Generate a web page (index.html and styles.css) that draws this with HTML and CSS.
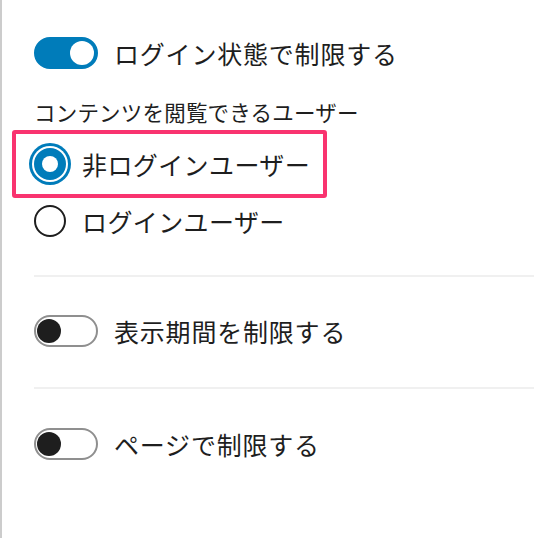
FILE: index.html
```html
<!DOCTYPE html>
<html lang="ja">
<head>
<meta charset="utf-8">
<link rel="stylesheet" href="styles.css">
</head>
<body>
<div class="panel">
  <div class="toggle-row first">
    <span class="toggle on"><span class="thumb"></span></span>
    <span class="toggle-label">ログイン状態で制限する</span>
  </div>
  <div class="group-label">コンテンツを閲覧できるユーザー</div>
  <div class="radios">
    <div class="radio-row highlighted">
      <span class="radio checked"></span>
      <span class="radio-label">非ログインユーザー</span>
    </div>
    <div class="radio-row">
      <span class="radio"></span>
      <span class="radio-label">ログインユーザー</span>
    </div>
  </div>
  <div class="sep sep1"></div>
  <div class="toggle-row second">
    <span class="toggle"><span class="thumb"></span></span>
    <span class="toggle-label">表示期間を制限する</span>
  </div>
  <div class="sep sep2"></div>
  <div class="toggle-row third">
    <span class="toggle"><span class="thumb"></span></span>
    <span class="toggle-label">ページで制限する</span>
  </div>
</div>
</body>
</html>
```
FILE: styles.css
```css
html, body {
  margin: 0;
  padding: 0;
  background: #ffffff;
}
body {
  font-family: "Noto Sans CJK JP", "Noto Sans", sans-serif;
  color: #1e1e1e;
  width: 534px;
  height: 538px;
  overflow: hidden;
}
.panel {
  box-sizing: border-box;
  height: 538px;
  border-left: 2px solid #cccccc;
  padding-left: 32px;
  padding-top: 37px;
}
.toggle-row {
  display: flex;
  align-items: center;
  gap: 16px;
  height: 32px;
}
.toggle-label {
  font-size: 25px;
  line-height: 32px;
  letter-spacing: 0.8px;
  white-space: nowrap;
}
.toggle {
  position: relative;
  box-sizing: border-box;
  flex: none;
  width: 64px;
  height: 32px;
  border-radius: 16px;
  border: 2px solid #8f8f8f;
  background: #ffffff;
}
.toggle .thumb {
  position: absolute;
  left: 1px;
  top: 2px;
  width: 24px;
  height: 24px;
  border-radius: 50%;
  background: #1e1e1e;
}
.toggle.on {
  background: #007cba;
  border-color: #007cba;
}
.toggle.on .thumb {
  left: auto;
  right: 2px;
  background: #ffffff;
}
.group-label {
  margin-top: 28px;
  font-size: 21.5px;
  line-height: 30px;
  letter-spacing: 0.2px;
  white-space: nowrap;
}
.radios {
  margin-top: 15px;
  display: flex;
  flex-direction: column;
  gap: 13px;
}
.radio-row {
  position: relative;
  display: flex;
  align-items: center;
  gap: 16px;
  height: 44px;
}
.radio-row.highlighted::after {
  content: "";
  position: absolute;
  left: -22px;
  top: -12px;
  width: 307px;
  height: 60px;
  border: 4px solid #f9336f;
  border-radius: 3px;
}
.radio {
  position: relative;
  box-sizing: border-box;
  flex: none;
  width: 32px;
  height: 32px;
  border-radius: 50%;
  border: 2px solid #1e1e1e;
  background: #ffffff;
}
.radio.checked {
  background: #007cba;
  border-color: #007cba;
  box-shadow: 0 0 0 2px #ffffff, 0 0 0 5px #007cba;
}
.radio.checked::after {
  content: "";
  position: absolute;
  left: 6px;
  top: 6px;
  width: 16px;
  height: 16px;
  border-radius: 50%;
  background: #ffffff;
}
.radio-label {
  font-size: 25px;
  line-height: 32px;
  letter-spacing: 0.4px;
  white-space: nowrap;
}
.sep {
  height: 2px;
  background: #f0f0f0;
}
.sep1 {
  margin-top: 32px;
}
.second {
  margin-top: 38px;
}
.sep2 {
  margin-top: 40px;
}
.third {
  margin-top: 39px;
}
```
